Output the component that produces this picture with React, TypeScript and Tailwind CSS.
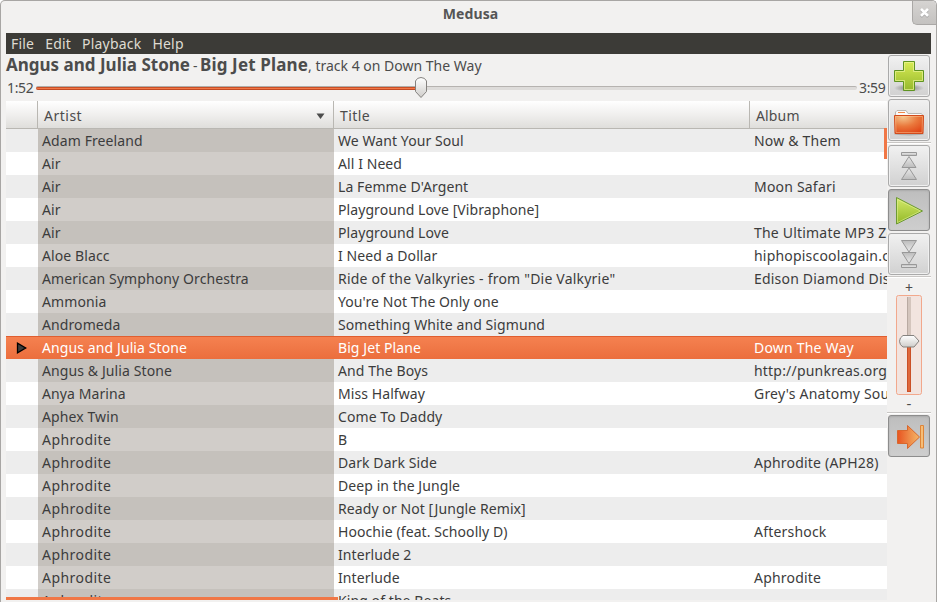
import type { ReactNode } from "react";

type Track = { artist: string; title: string; album?: string; playing?: boolean };

const tracks: Track[] = [
  { artist: "Adam Freeland", title: "We Want Your Soul", album: "Now & Them" },
  { artist: "Air", title: "All I Need" },
  { artist: "Air", title: "La Femme D'Argent", album: "Moon Safari" },
  { artist: "Air", title: "Playground Love [Vibraphone]" },
  { artist: "Air", title: "Playground Love", album: "The Ultimate MP3 Zone" },
  { artist: "Aloe Blacc", title: "I Need a Dollar", album: "hiphopiscoolagain.com" },
  { artist: "American Symphony Orchestra", title: 'Ride of the Valkyries - from "Die Valkyrie"', album: "Edison Diamond Disc" },
  { artist: "Ammonia", title: "You're Not The Only one" },
  { artist: "Andromeda", title: "Something White and Sigmund" },
  { artist: "Angus and Julia Stone", title: "Big Jet Plane", album: "Down The Way", playing: true },
  { artist: "Angus & Julia Stone", title: "And The Boys", album: "http://punkreas.org" },
  { artist: "Anya Marina", title: "Miss Halfway", album: "Grey's Anatomy Sound" },
  { artist: "Aphex Twin", title: "Come To Daddy" },
  { artist: "Aphrodite", title: "B" },
  { artist: "Aphrodite", title: "Dark Dark Side", album: "Aphrodite (APH28)" },
  { artist: "Aphrodite", title: "Deep in the Jungle" },
  { artist: "Aphrodite", title: "Ready or Not [Jungle Remix]" },
  { artist: "Aphrodite", title: "Hoochie (feat. Schoolly D)", album: "Aftershock" },
  { artist: "Aphrodite", title: "Interlude 2" },
  { artist: "Aphrodite", title: "Interlude", album: "Aphrodite" },
  { artist: "Aphrodite", title: "King of the Beats" },
];

function TitleBar() {
  return (
    <div className="relative h-[33px] shrink-0 pl-[4px] text-center text-[14px] font-bold leading-[25px] tracking-[0.1px] text-[#555]">
      Medusa
      <div className="absolute right-0 top-0 flex h-6 w-6 items-center justify-center rounded-bl-[5px] rounded-tr-[4px] border-b border-l border-[#aaa8a6] bg-linear-to-b from-[#d6d4d2] to-[#c4c2c0]">
        <svg width="11" height="11" viewBox="0 0 11 11">
          <path d="M2 2.8 9 9.8M9 2.8 2 9.8" stroke="#999" strokeWidth="2.6" />
          <path d="M2 2 9 9M9 2 2 9" stroke="#fff" strokeWidth="2.6" />
        </svg>
      </div>
    </div>
  );
}

function Header() {
  return (
    <div className="flex h-7 shrink-0 border-b border-[#b9b7b2] bg-linear-to-b from-white via-[#f0efee] to-[#dfdedb] leading-[29px] text-[#4c4c4c]">
      <div className="w-8 border-r border-[#b9b7b2]" />
      <div className="flex w-[296px] justify-between border-r border-[#b9b7b2] pl-[6px] pr-2 tracking-[0.5px]">
        <span>Artist</span>
        <svg className="mt-3" width="9" height="6" viewBox="0 0 9 6">
          <path d="M0.5 0.5h8L4.5 6Z" fill="#4c4c4c" />
        </svg>
      </div>
      <div className="w-[416px] border-r border-[#b9b7b2] pl-[6px] tracking-[0.4px]">Title</div>
      <div className="pl-[6px] tracking-[0.15px]">Album</div>
    </div>
  );
}

function Row({ track, odd }: { track: Track; odd: boolean }) {
  const base = track.playing
    ? "border-t border-[#e05e30] bg-linear-to-b from-[#f58150] to-[#eb6e3d] text-white leading-[22px]"
    : odd
      ? "bg-white text-[#3c3c3c] leading-[23px]"
      : "bg-[#ededed] text-[#3c3c3c] leading-[23px]";
  const sorted = track.playing ? "" : odd ? "bg-[#d1cdc9]" : "bg-[#c5c1bc]";
  return (
    <div className={`flex h-[23px] w-[881px] shrink-0 whitespace-nowrap ${base}`}>
      <div className="flex w-8 shrink-0 items-center pl-[10px]">
        {track.playing && (
          <svg width="11" height="12" viewBox="0 0 11 12">
            <path d="M1.5 1.2v9.6L9.7 6Z" fill="#3c3c3c" stroke="#000" strokeWidth="1.3" />
          </svg>
        )}
      </div>
      <div className={`w-[296px] shrink-0 pl-1 tracking-[0.1px] ${track.artist === "Aphrodite" ? "tracking-[0.45px]" : ""} ${sorted}`}>
        {track.artist}
      </div>
      <div className={`w-[416px] shrink-0 pl-1 ${track.title.length > 35 ? "tracking-[0.21px]" : "tracking-[0.08px]"}`}>
        {track.title}
      </div>
      <div className="w-[137px] shrink-0 overflow-hidden pl-1 tracking-[0.2px]">{track.album}</div>
    </div>
  );
}

function ToolButton({ children, pressed = false }: { children: ReactNode; pressed?: boolean }) {
  const look = pressed
    ? "border-[#8d8d8d] bg-linear-to-b from-[#bebebe] to-[#cecece] shadow-[inset_0_1px_2px_#aaa]"
    : "border-[#aaa] bg-linear-to-b from-[#f1f1f1] to-[#d1d1d1] shadow-[inset_0_0_0_1px_#f0f0f0]";
  return (
    <div className={`flex h-[42px] w-[42px] shrink-0 items-center justify-center rounded-[3px] border ${look}`}>
      {children}
    </div>
  );
}

function Divider() {
  return <div className="h-[2px] w-full shrink-0 border-b border-white bg-[#c8c6c4]" />;
}

function AddIcon() {
  return (
    <svg width="32" height="32" viewBox="0 0 32 32">
      <defs>
        <linearGradient id="add" x1="0" y1="0" x2="0" y2="1">
          <stop stopColor="#d8ec55" />
          <stop offset="1" stopColor="#95b82c" />
        </linearGradient>
        <radialGradient id="addShadow">
          <stop stopColor="#555" stopOpacity=".7" />
          <stop offset="1" stopColor="#555" stopOpacity="0" />
        </radialGradient>
      </defs>
      <ellipse cx="16" cy="28" rx="15" ry="4" fill="url(#addShadow)" />
      <path d="M10.500 1.500h11v9h9v11h-9v9h-11v-9h-9v-11h9Z" fill="url(#add)" stroke="#5f9422" />
      <path d="M11.500 2.500h9v9h9v9h-9v9h-9v-9h-9v-9h9Z" fill="none" stroke="#eef6a0" strokeOpacity=".65" />
    </svg>
  );
}

function FolderIcon() {
  return (
    <svg width="32" height="32" viewBox="0 0 32 32">
      <defs>
        <radialGradient id="folder" cx=".3" cy="0.1" r="1">
          <stop stopColor="#f4c48c" />
          <stop offset=".5" stopColor="#ea783c" />
          <stop offset="1" stopColor="#df4214" />
        </radialGradient>
      </defs>
      <ellipse cx="16" cy="30" rx="15" ry="1.500" fill="#777" opacity=".4" />
      <path d="M2.500 14V8l1.500-1.500h9l2 3h13.500l1 1.500V14Z" fill="#fbfaf9" stroke="#bbb7b3" />
      <path d="M5 8.500h7" stroke="#f08a4c" />
      <path d="M1.500 11.500h29l-.5 18H2Z" fill="url(#folder)" stroke="#d24b1c" />
      <path d="M2.500 12.500h27l-.5 16H3Z" fill="none" stroke="#ffd09f" strokeOpacity=".45" />
    </svg>
  );
}

function SkipIcon({ down = false }: { down?: boolean }) {
  return (
    <svg width="32" height="32" viewBox="0 0 32 32" className={down ? "-scale-y-100" : ""}>
      <defs>
        <linearGradient id="skip" x1="0" y1="0" x2="0" y2="1">
          <stop stopColor="#ececec" />
          <stop offset="1" stopColor="#bcbcbc" />
        </linearGradient>
      </defs>
      <g fill="url(#skip)" stroke="#989898" strokeLinejoin="round">
        <path d="M8.500 2.500h15v3h-15Z" />
        <path d="M16 6.500 23 17.500H9Z" />
        <path d="M16 18 23.500 29.500h-15Z" />
      </g>
    </svg>
  );
}

function PlayIcon() {
  return (
    <svg width="32" height="32" viewBox="0 0 32 32">
      <defs>
        <linearGradient id="play" x1="0" y1="0" x2="0" y2="1">
          <stop stopColor="#d3e96a" />
          <stop offset="1" stopColor="#93b928" />
        </linearGradient>
      </defs>
      <path d="M3.500 3.500v26.500L29.500 17Z" fill="url(#play)" stroke="#6c9a33" strokeLinejoin="round" />
      <path d="M4.500 5.500v23L27.500 17Z" fill="none" stroke="#e9f4a3" strokeOpacity=".5" />
    </svg>
  );
}

function NextIcon() {
  return (
    <svg width="32" height="32" viewBox="0 0 32 32">
      <defs>
        <linearGradient id="next" x1="0" y1="0" x2="1" y2="0">
          <stop stopColor="#e85420" />
          <stop offset="1" stopColor="#f4b96a" />
        </linearGradient>
      </defs>
      <path d="M4.500 10.500h10V5.500L26.500 17 14.500 28.500v-5h-10Z" fill="url(#next)" stroke="#d8672c" />
      <path d="M27.500 5.500h3v22.500h-3Z" fill="#f6bd77" stroke="#de8538" />
    </svg>
  );
}

function VolumeSlider() {
  return (
    <svg width="28" height="102" viewBox="0 0 28 102">
      <defs>
        <linearGradient id="knob" x1="0" y1="0" x2="0" y2="1">
          <stop stopColor="#fff" />
          <stop offset="1" stopColor="#cfcdca" />
        </linearGradient>
      </defs>
      <rect x="1.500" y="1.500" width="25" height="99" rx="2" fill="#f2e4df" stroke="#f2a88c" />
      <path d="M12 3h4v44h-4Z" fill="#d4c5bd" />
      <path d="M12.500 3v44" stroke="#b9aaa2" />
      <path d="M12 48h4v50h-4Z" fill="#ca5027" />
      <path d="M14 48v49" stroke="#f47f50" />
      <path d="M8 41.500h11l5 5.500-5 6H8q-3.500-2-3.500-5.700T8 41.500Z" fill="url(#knob)" stroke="#85827f" />
    </svg>
  );
}

function SeekBar() {
  return (
    <div className="flex h-6 shrink-0 text-[14px] leading-[22px] tracking-[-0.35px]">
      <span className="w-[30px] pl-px">1:52</span>
      <div className="relative h-6 w-[821px]">
        <div className="mt-[9px] flex h-1">
          <div className="w-[385px] rounded-l-full border-b border-t border-b-[#c14a24] border-t-[#b1aeaa] bg-[#f27746] shadow-[inset_0_1px_0_#ca5027]" />
          <div className="flex-1 rounded-r-full border-t border-[#b6b3b0] bg-[#dedcda]" />
        </div>
        <svg className="absolute left-[378px] top-0" width="14" height="22" viewBox="0 0 14 22">
          <path d="M1.500 4Q3 .500 7 .500T12.500 4v10.500L7 20.500l-5.500-6Z" fill="url(#knob)" stroke="#85827f" />
        </svg>
      </div>
      <span className="pl-[2px]">3:59</span>
    </div>
  );
}

function Toolbar() {
  return (
    <div className="flex w-[44px] shrink-0 flex-col items-center pt-px">
      <ToolButton><AddIcon /></ToolButton>
      <div className="h-[2px]" />
      <ToolButton><FolderIcon /></ToolButton>
      <div className="w-full py-px"><Divider /></div>
      <ToolButton><SkipIcon /></ToolButton>
      <div className="h-[2px]" />
      <ToolButton pressed><PlayIcon /></ToolButton>
      <div className="h-[2px]" />
      <ToolButton><SkipIcon down /></ToolButton>
      <div className="h-px" />
      <Divider />
      <span className="mt-[2px] h-[14px] text-[14px] leading-[15px]">+</span>
      <VolumeSlider />
      <span className="h-[16px] text-[15px] leading-[15px]">-</span>
      <Divider />
      <div className="h-px" />
      <ToolButton pressed><NextIcon /></ToolButton>
    </div>
  );
}

export default function App() {
  return (
    <div className="flex h-[602px] w-[937px] flex-col overflow-hidden rounded-t-[5px] border-l border-r border-t border-[#a8a6a4] bg-[#f2f1f0] font-['Noto_Sans','Open_Sans',sans-serif] text-[14px] text-[#4c4c4c]">
      <TitleBar />
      <div className="-mt-px flex h-[570px] flex-col pl-[5px]">
        <div className="flex h-[21px] w-[925px] shrink-0 gap-[11px] bg-[#3c3b37] pl-[5px] leading-[21px] tracking-[0.2px] text-[#dfdbd2]">
          <span>File</span>
          <span>Edit</span>
          <span>Playback</span>
          <span>Help</span>
        </div>
        <div className="flex min-h-0 flex-1">
          <div className="flex w-[881px] flex-col">
            <div className="h-[23px] shrink-0 whitespace-nowrap leading-[21px]">
              <b className="text-[17px]">Angus and Julia Stone</b>
              <span className="tracking-[-0.6px]"> - </span>
              <b className="text-[17px] tracking-[0.15px]">Big Jet Plane</b>, track 4 on Down The Way
            </div>
            <SeekBar />
            <div className="relative flex h-[499px] shrink-0 flex-col overflow-hidden">
              <Header />
              {tracks.map((track, i) => (
                <Row key={i} track={track} odd={i % 2 === 1} />
              ))}
              <div className="absolute right-0 top-[27px] h-[31px] w-[3px] bg-[#f07746]" />
              <div className="absolute bottom-0 left-0 h-[3px] w-[332px] bg-[#f07746]" />
            </div>
          </div>
          <Toolbar />
        </div>
      </div>
    </div>
  );
}
